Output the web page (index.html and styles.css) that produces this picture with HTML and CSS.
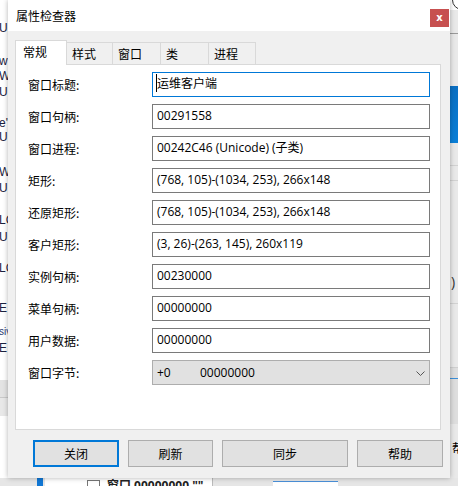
FILE: index.html
```html
<!DOCTYPE html>
<html lang="zh-CN">
<head>
<meta charset="utf-8">
<title>属性检查器</title>
<link rel="stylesheet" href="styles.css">
</head>
<body>
<div class="desk">
  <div class="bg-left">
    <span class="frag" style="top:21px">UI</span>
    <span class="frag" style="top:54px">w</span>
    <span class="frag" style="top:69px">W</span>
    <span class="frag" style="top:85px">UI</span>
    <span class="frag" style="top:116px">e"</span>
    <span class="frag" style="top:130px">UI</span>
    <span class="frag" style="top:165px">W</span>
    <span class="frag" style="top:181px">UI</span>
    <span class="frag" style="top:213px">LC</span>
    <span class="frag" style="top:230px">UI</span>
    <span class="frag" style="top:261px">LC</span>
    <span class="frag" style="top:301px">E</span>
    <span class="frag small" style="top:325px">siv</span>
    <span class="frag" style="top:341px">E</span>
    <div class="left-band"></div>
  </div>
  <div class="bg-right">
    <div class="r-top"></div>
    <div class="r-line" style="top:33px"></div>
    <div class="r-blue"></div>
    <div class="r-line light" style="top:165px"></div>
    <div class="r-line light" style="top:180px"></div>
    <span class="r-paren">)</span>
    <div class="r-line light" style="top:303px"></div>
    <div class="r-band"></div>
    <span class="r-char">帮</span>
  </div>
  <div class="bg-bottom">
    <div class="b-blue"></div>
    <div class="b-white"><span class="b-check"></span><span class="b-text">窗口 00000000 &quot;&quot;</span></div>
    <div class="b-box"></div>
  </div>

  <div class="dialog">
    <div class="titlebar">
      <span class="title">属性检查器</span>
      <div class="close">x</div>
    </div>
    <div class="body">
      <div class="tabs">
        <div class="tab active">常规</div>
        <div class="tab w47">样式</div>
        <div class="tab w49">窗口</div>
        <div class="tab w49">类</div>
        <div class="tab w48">进程</div>
      </div>
      <div class="panel">
        <div class="form">
          <div class="label">窗口标题:</div>
          <div class="field focus"><span class="caret"></span>运维客户端</div>
          <div class="label">窗口句柄:</div>
          <div class="field">00291558</div>
          <div class="label">窗口进程:</div>
          <div class="field">00242C46 (Unicode) (子类)</div>
          <div class="label">矩形:</div>
          <div class="field">(768, 105)-(1034, 253), 266x148</div>
          <div class="label">还原矩形:</div>
          <div class="field">(768, 105)-(1034, 253), 266x148</div>
          <div class="label">客户矩形:</div>
          <div class="field">(3, 26)-(263, 145), 260x119</div>
          <div class="label">实例句柄:</div>
          <div class="field">00230000</div>
          <div class="label">菜单句柄:</div>
          <div class="field">00000000</div>
          <div class="label">用户数据:</div>
          <div class="field">00000000</div>
          <div class="label">窗口字节:</div>
          <div class="combo">
            <span class="combo-off">+0</span>
            <span class="combo-val">00000000</span>
            <svg class="chev" width="9" height="5" viewBox="0 0 9 5"><polyline points="0.5,0.5 4.5,4.5 8.5,0.5" fill="none" stroke="#555" stroke-width="1"/></svg>
          </div>
        </div>
      </div>
      <div class="buttons">
        <div class="btn default w86">关闭</div>
        <div class="btn w85">刷新</div>
        <div class="btn w126">同步</div>
        <div class="btn w86">帮助</div>
      </div>
    </div>
  </div>
</div>
</body>
</html>
```
FILE: styles.css
```css
html, body {
  margin: 0;
  padding: 0;
}
body {
  width: 458px;
  height: 486px;
  overflow: hidden;
  background: #ececec;
  font-family: "Open Sans", "Noto Sans CJK SC", sans-serif;
  font-size: 12px;
  color: #000;
}
.desk {
  position: relative;
  width: 458px;
  height: 486px;
  overflow: hidden;
}

/* background windows */
.bg-left {
  position: absolute;
  left: 0;
  top: 0;
  width: 8px;
  height: 486px;
  background: #fff;
  overflow: hidden;
}
.frag {
  position: absolute;
  left: -1px;
  font-family: "Liberation Sans", sans-serif;
  font-size: 12px;
  line-height: 14px;
  color: #1b2240;
  white-space: nowrap;
}
.frag.small { font-size: 10px; color: #2a3a70; }
.left-band {
  position: absolute;
  left: 0;
  top: 380px;
  width: 8px;
  height: 36px;
  background: #e3e3e3;
  border-top: 0;
  box-shadow: inset 0 -18px 0 #e8e8e8, inset 0 -19px 0 #c9c9c9;
}
.bg-right {
  position: absolute;
  left: 450px;
  top: 0;
  width: 8px;
  height: 486px;
  background: #e9e9e9;
  overflow: hidden;
}
.r-top {
  position: absolute;
  left: 0;
  top: 0;
  width: 8px;
  height: 10px;
  background: #fff;
}
.r-top::after {
  content: "";
  position: absolute;
  left: 2px;
  top: -10px;
  width: 18px;
  height: 18px;
  border: 1px solid #333;
  border-radius: 50%;
}
.r-line {
  position: absolute;
  left: 0;
  width: 8px;
  height: 1px;
  background: #9a9a9a;
}
.r-line.light { background: #d2d2d2; }
.r-blue {
  position: absolute;
  left: 0;
  top: 86px;
  width: 8px;
  height: 57px;
  background: linear-gradient(#0a6fc2, #0a7fd8);
}
.r-paren {
  position: absolute;
  left: 1px;
  top: 274px;
  font-size: 14px;
  line-height: 16px;
  color: #333;
}
.r-band {
  position: absolute;
  left: 0;
  top: 367px;
  width: 8px;
  height: 56px;
  background: #dedede;
  border-top: 1px solid #cfcfcf;
  box-shadow: inset 0 10px 0 #dedede, inset 0 11px 0 #3b8fd9;
}
.r-char {
  position: absolute;
  left: 2px;
  top: 441px;
  font-size: 12px;
  line-height: 16px;
}
.bg-bottom {
  position: absolute;
  left: 0;
  top: 478px;
  width: 458px;
  height: 8px;
  background: #e6e6e6;
  overflow: hidden;
}
.b-blue {
  position: absolute;
  left: 37px;
  top: 0;
  width: 6px;
  height: 8px;
  background: #1177d4;
}
.b-white {
  position: absolute;
  left: 45px;
  top: 0;
  width: 167px;
  height: 8px;
  background: #fff;
  border-right: 1px solid #bbb;
}
.b-check {
  position: absolute;
  left: 42px;
  top: 2px;
  width: 11px;
  height: 11px;
  border: 1px solid #777;
  background: #fff;
}
.b-text {
  position: absolute;
  left: 62px;
  top: 0;
  font-size: 12px;
  line-height: 16px;
  font-weight: bold;
  color: #222;
  white-space: nowrap;
}
.b-box {
  position: absolute;
  left: 273px;
  top: 3px;
  width: 65px;
  height: 8px;
  background: #fff;
  border-top: 1px solid #4a90d9;
}

/* dialog */
.dialog {
  position: absolute;
  left: 8px;
  top: 0;
  width: 442px;
  height: 478px;
  background: #f0f0f0;
  box-shadow: 0 0 5px rgba(0, 0, 0, 0.3);
  display: flex;
  flex-direction: column;
}
.titlebar {
  position: relative;
  height: 31px;
  background: #fff;
  display: flex;
  align-items: center;
  padding-left: 8px;
}
.title {
  font-family: "Noto Sans CJK SC", sans-serif;
  font-size: 12px;
  line-height: 16px;
  margin-top: 0;
}
.close {
  position: absolute;
  right: 1px;
  top: 9px;
  width: 19px;
  height: 18px;
  background: #c75050;
  color: #fff;
  font-family: "DejaVu Sans", sans-serif;
  font-weight: bold;
  font-size: 10px;
  line-height: 17px;
  text-align: center;
}
.body {
  padding: 9px 0 0 7px;
}
.tabs {
  display: flex;
  align-items: flex-end;
  height: 24px;
}
.tab {
  box-sizing: border-box;
  height: 22px;
  border: 1px solid #d9d9d9;
  border-bottom: none;
  margin-left: -1px;
  padding-left: 5px;
  background: #f0f0f0;
  font-family: "Noto Sans CJK SC", sans-serif;
  line-height: 22px;
}
.tab.active {
  position: relative;
  z-index: 1;
  width: 52px;
  height: 25px;
  margin-left: 0;
  margin-bottom: -1px;
  padding-left: 7px;
  background: #fff;
  line-height: 22px;
}
.w47 { width: 47px; }
.w48 { width: 48px; }
.w49 { width: 49px; }
.panel {
  box-sizing: border-box;
  width: 426px;
  height: 366px;
  background: #fff;
  border: 1px solid #d9d9d9;
}
.form {
  display: grid;
  grid-template-columns: 124px 278px;
  grid-auto-rows: 25px;
  row-gap: 7px;
  padding: 7px 0 0 12px;
}
.label {
  display: flex;
  align-items: center;
  font-family: "Noto Sans CJK SC", sans-serif;
  line-height: 16px;
}
.field {
  position: relative;
  box-sizing: border-box;
  border: 1px solid #7a7a7a;
  background: #fff;
  padding-left: 4px;
  line-height: 22px;
  white-space: nowrap;
  overflow: hidden;
}
.field.focus {
  border-color: #0078d7;
}
.caret {
  position: absolute;
  left: 3px;
  top: 1px;
  width: 1px;
  height: 18px;
  background: #000;
}
.combo {
  box-sizing: border-box;
  border: 1px solid #adadad;
  background: #e1e1e1;
  display: flex;
  align-items: center;
  padding-left: 4px;
  padding-right: 4px;
}
.combo-off {
  width: 43px;
}
.combo-val {
  flex: 1;
}
.chev {
  display: block;
  margin-top: 1px;
}
.buttons {
  display: flex;
  margin-top: 10px;
  padding-left: 18px;
}
.btn {
  box-sizing: border-box;
  height: 27px;
  border: 1px solid #adadad;
  background: #e1e1e1;
  margin-left: 9px;
  display: flex;
  align-items: center;
  justify-content: center;
  font-family: "Noto Sans CJK SC", sans-serif;
  line-height: 16px;
}
.btn.default {
  margin-left: 0;
  border: 2px solid #0078d7;
}
.w85 { width: 85px; }
.w86 { width: 86px; }
.w126 { width: 126px; }
```
